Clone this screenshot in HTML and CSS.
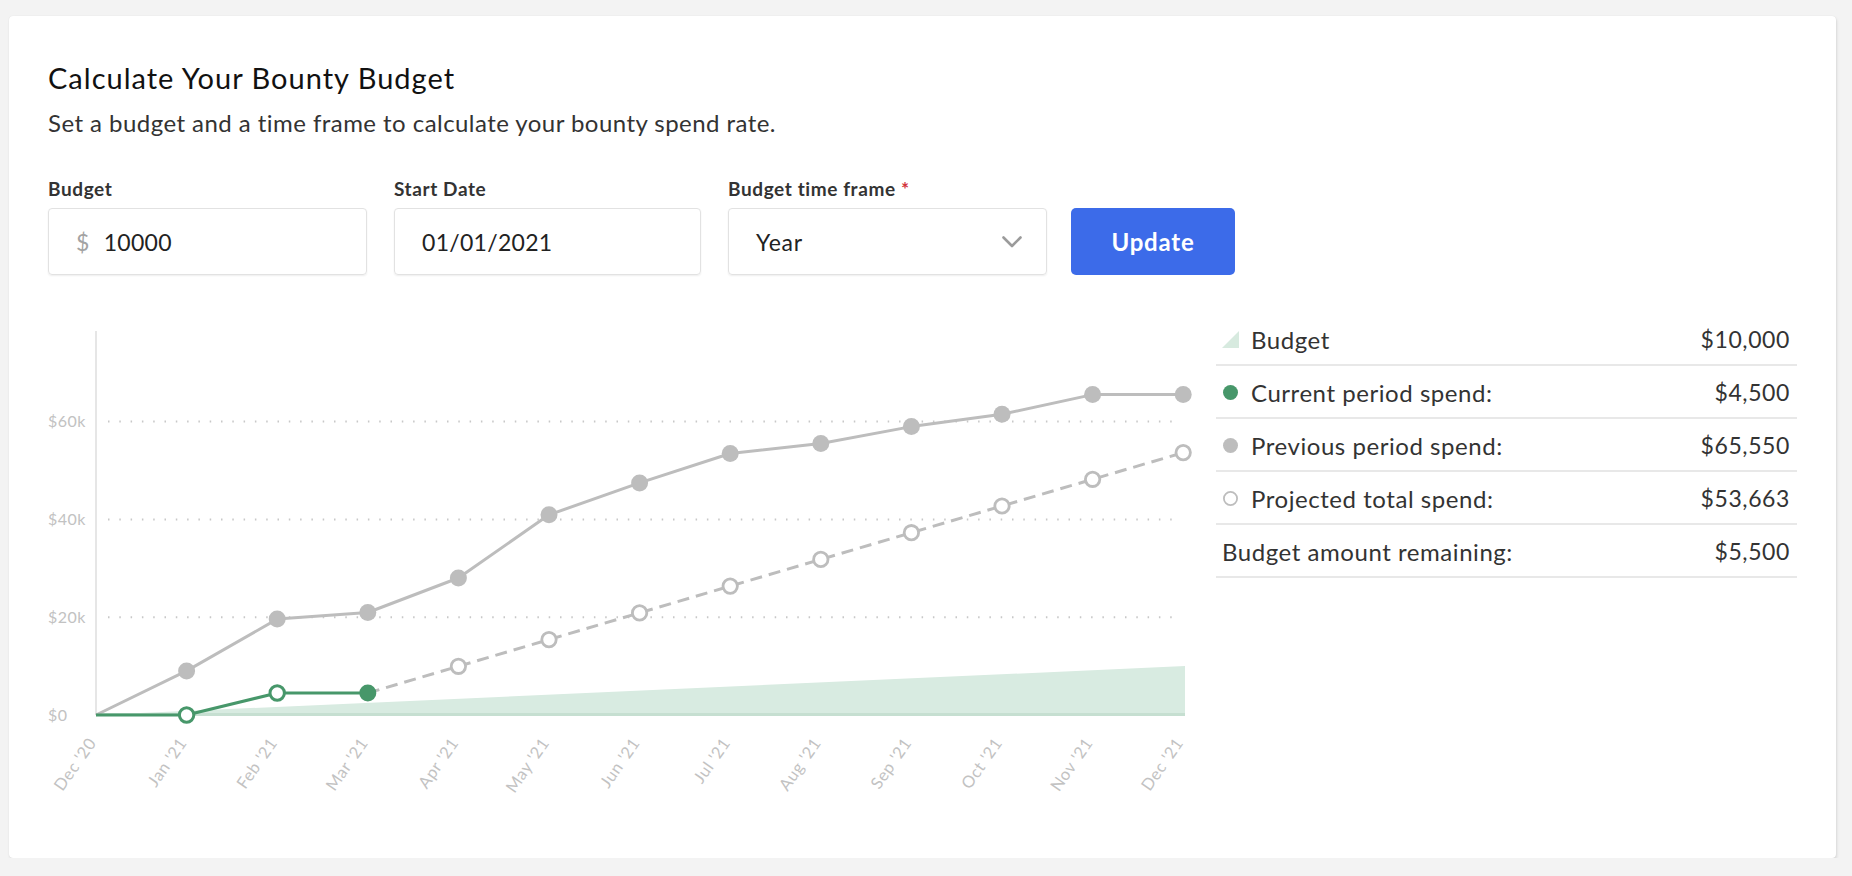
FILE: index.html
```html
<!DOCTYPE html>
<html lang="en">
<head>
<meta charset="utf-8">
<title>Calculate Your Bounty Budget</title>
<link rel="stylesheet" href="styles.css">
</head>
<body>
<div class="page">
  <section class="card">
    <h1 class="title">Calculate Your Bounty Budget</h1>
    <p class="subtitle">Set a budget and a time frame to calculate your bounty spend rate.</p>

    <form class="form-row" onsubmit="return false">
      <div class="field field-budget">
        <label class="label">Budget</label>
        <div class="input"><span class="prefix">$</span><span class="value">10000</span></div>
      </div>
      <div class="field field-date">
        <label class="label">Start Date</label>
        <div class="input"><span class="value">01/01/2021</span></div>
      </div>
      <div class="field field-frame">
        <label class="label">Budget time frame <span class="req">*</span></label>
        <div class="input select">
          <span class="value">Year</span>
          <svg class="chevron" width="20" height="12" viewBox="0 0 20 12"><path d="M1.5 1.5 L10 10 L18.5 1.5" fill="none" stroke="#9b9b9b" stroke-width="2.6" stroke-linecap="round" stroke-linejoin="round"/></svg>
        </div>
      </div>
      <button class="btn" type="button">Update</button>
    </form>

    <div class="chart-row">
      <svg class="chart" width="1150" height="500" viewBox="0 0 1150 500">
        <g class="grid">
          <line x1="60" y1="120.6" x2="1132" y2="120.6"/>
          <line x1="60" y1="218.4" x2="1132" y2="218.4"/>
          <line x1="60" y1="316.2" x2="1132" y2="316.2"/>
        </g>
        <g class="ytick">
          <text x="0" y="126.4">$60k</text>
          <text x="0" y="224.2">$40k</text>
          <text x="0" y="322">$20k</text>
          <text x="0" y="419.8">$0</text>
        </g>
        <polygon class="budget-area" points="48,414 1137,365.1 1137,414"/>
        <line class="budget-base" x1="48" y1="413.5" x2="1137" y2="413.5"/>
        <line class="axis" x1="48" y1="30" x2="48" y2="414"/>

        <polyline class="prev-line" points="48,414 138.6,369.9 229.2,318.1 319.8,311.5 410.4,277 501,213.8 591.6,181.9 682.2,152.5 772.8,142.5 863.4,125.6 954,113.2 1044.6,93.6 1135.2,93.6"/>
        <g class="prev-dot">
          <circle cx="138.6" cy="369.9" r="8.5"/>
          <circle cx="229.2" cy="318.1" r="8.5"/>
          <circle cx="319.8" cy="311.5" r="8.5"/>
          <circle cx="410.4" cy="277" r="8.5"/>
          <circle cx="501" cy="213.8" r="8.5"/>
          <circle cx="591.6" cy="181.9" r="8.5"/>
          <circle cx="682.2" cy="152.5" r="8.5"/>
          <circle cx="772.8" cy="142.5" r="8.5"/>
          <circle cx="863.4" cy="125.6" r="8.5"/>
          <circle cx="954" cy="113.2" r="8.5"/>
          <circle cx="1044.6" cy="93.6" r="8.5"/>
          <circle cx="1135.2" cy="93.6" r="8.5"/>
        </g>

        <polyline class="proj-line" points="319.8,392 410.4,365.3 501,338.6 591.6,311.9 682.2,285.1 772.8,258.4 863.4,231.7 954,205 1044.6,178.3 1135.2,151.6"/>
        <g class="proj-dot">
          <circle cx="410.4" cy="365.3" r="7.2"/>
          <circle cx="501" cy="338.6" r="7.2"/>
          <circle cx="591.6" cy="311.9" r="7.2"/>
          <circle cx="682.2" cy="285.1" r="7.2"/>
          <circle cx="772.8" cy="258.4" r="7.2"/>
          <circle cx="863.4" cy="231.7" r="7.2"/>
          <circle cx="954" cy="205" r="7.2"/>
          <circle cx="1044.6" cy="178.3" r="7.2"/>
          <circle cx="1135.2" cy="151.6" r="7.2"/>
        </g>

        <polyline class="cur-line" points="48,414 138.6,414 229.2,392 319.8,392"/>
        <circle class="cur-hollow" cx="138.6" cy="414" r="7.2"/>
        <circle class="cur-hollow" cx="229.2" cy="392" r="7.2"/>
        <circle class="cur-dot" cx="319.8" cy="392" r="8.5"/>

        <g class="xtick">
          <text transform="translate(49,442) rotate(-55)">Dec '20</text>
          <text transform="translate(139.6,442) rotate(-55)">Jan '21</text>
          <text transform="translate(230.2,442) rotate(-55)">Feb '21</text>
          <text transform="translate(320.8,442) rotate(-55)">Mar '21</text>
          <text transform="translate(411.4,442) rotate(-55)">Apr '21</text>
          <text transform="translate(502,442) rotate(-55)">May '21</text>
          <text transform="translate(592.6,442) rotate(-55)">Jun '21</text>
          <text transform="translate(683.2,442) rotate(-55)">Jul '21</text>
          <text transform="translate(773.8,442) rotate(-55)">Aug '21</text>
          <text transform="translate(864.4,442) rotate(-55)">Sep '21</text>
          <text transform="translate(955,442) rotate(-55)">Oct '21</text>
          <text transform="translate(1045.6,442) rotate(-55)">Nov '21</text>
          <text transform="translate(1136.2,442) rotate(-55)">Dec '21</text>
        </g>
      </svg>

      <div class="legend">
        <div class="legend-row">
          <span class="name"><svg class="icon" width="17" height="17" viewBox="0 0 17 17"><polygon points="0,17 17,17 17,0" fill="#d7eadf"/></svg>Budget</span>
          <span class="amount">$10,000</span>
        </div>
        <div class="legend-row">
          <span class="name"><svg class="icon" width="17" height="17" viewBox="0 0 17 17"><circle cx="8.5" cy="8.5" r="7.5" fill="#47976a"/></svg>Current period spend:</span>
          <span class="amount">$4,500</span>
        </div>
        <div class="legend-row">
          <span class="name"><svg class="icon" width="17" height="17" viewBox="0 0 17 17"><circle cx="8.5" cy="8.5" r="7.5" fill="#bdbdbd"/></svg>Previous period spend:</span>
          <span class="amount">$65,550</span>
        </div>
        <div class="legend-row">
          <span class="name"><svg class="icon" width="17" height="17" viewBox="0 0 17 17"><circle cx="8.5" cy="8.5" r="6.6" fill="#fff" stroke="#bdbdbd" stroke-width="1.8"/></svg>Projected total spend:</span>
          <span class="amount">$53,663</span>
        </div>
        <div class="legend-row">
          <span class="name">Budget amount remaining:</span>
          <span class="amount">$5,500</span>
        </div>
      </div>
    </div>
  </section>
</div>
</body>
</html>
```

FILE: styles.css
```css
* { box-sizing: border-box; }

html, body {
  margin: 0;
  padding: 0;
  background: #f3f3f3;
  font-family: Lato, "Liberation Sans", sans-serif;
  color: #222;
}

.page {
  padding: 16px 16px 0 9px;
}

.card {
  background: #fff;
  border-radius: 4px;
  height: 842px;
  padding: 46px 39px 0;
  box-shadow: 0 0 1px rgba(0, 0, 0, 0.12), 1px 2px 3px rgba(0, 0, 0, 0.10);
}

.title {
  margin: 0;
  font-size: 29px;
  line-height: 32px;
  font-weight: 400;
  letter-spacing: 1px;
  color: #111;
}

.subtitle {
  margin: 15px 0 0;
  font-size: 24px;
  line-height: 28px;
  letter-spacing: 0.45px;
  color: #333;
}

.form-row {
  display: flex;
  align-items: flex-end;
  gap: 27px;
  margin: 41px 0 0;
}

.field {
  display: flex;
  flex-direction: column;
  gap: 8px;
}

.field-budget { width: 319px; }
.field-date { width: 307px; }
.field-frame { width: 319px; }

.label {
  font-size: 19px;
  line-height: 22px;
  font-weight: 700;
  letter-spacing: 0.6px;
  color: #333;
}

.req {
  color: #d2333b;
  font-weight: 700;
}

.input {
  height: 67px;
  border: 1px solid #e2e2e2;
  border-radius: 4px;
  box-shadow: 0 1px 2px rgba(0, 0, 0, 0.07);
  display: flex;
  align-items: center;
  padding: 0 27px;
  font-size: 23px;
  letter-spacing: 0.3px;
  color: #222;
}

.prefix {
  color: #a3a3a3;
  margin-right: 14px;
}

.select {
  justify-content: space-between;
  padding-right: 24px;
}

.select .value { letter-spacing: 0.8px; }

.chevron { display: block; }

.btn {
  width: 164px;
  height: 67px;
  margin-left: -3px;
  border: none;
  border-radius: 5px;
  background: #3c6be9;
  color: #fff;
  font-family: Lato, "Liberation Sans", sans-serif;
  font-size: 24px;
  font-weight: 700;
  letter-spacing: 0.8px;
  cursor: pointer;
}

.chart-row {
  display: flex;
  align-items: flex-start;
  gap: 18px;
  margin-top: 26px;
}

.chart {
  display: block;
  flex: none;
  overflow: visible;
}

.grid line {
  stroke: #c8c8c8;
  stroke-width: 2;
  stroke-dasharray: 1.5 9.8;
}

.ytick text {
  font-size: 16px;
  letter-spacing: 0.5px;
  fill: #c2c2c2;
}

.xtick text {
  font-size: 16.5px;
  letter-spacing: 0.6px;
  fill: #c2c2c2;
  text-anchor: end;
}

.axis {
  stroke: #e6e6e6;
  stroke-width: 2;
}

.budget-area { fill: #d8ebe1; }
.budget-base { stroke: #c6dfd1; stroke-width: 3; }

.prev-line {
  fill: none;
  stroke: #bdbdbd;
  stroke-width: 3;
  stroke-linejoin: round;
}

.prev-dot circle { fill: #bdbdbd; }

.proj-line {
  fill: none;
  stroke: #bdbdbd;
  stroke-width: 3;
  stroke-dasharray: 12 7;
}

.proj-dot circle {
  fill: #fff;
  stroke: #bdbdbd;
  stroke-width: 2.8;
}

.cur-line {
  fill: none;
  stroke: #47976a;
  stroke-width: 3;
  stroke-linejoin: round;
}

.cur-hollow {
  fill: #fff;
  stroke: #47976a;
  stroke-width: 3;
}

.cur-dot { fill: #47976a; }

.legend {
  width: 581px;
  flex: none;
  margin-top: 12px;
  font-size: 24px;
  color: #333;
}

.legend-row {
  display: flex;
  align-items: center;
  justify-content: space-between;
  height: 53px;
  padding: 1px 7px 0 6px;
  border-bottom: 2px solid #e8e8e8;
  white-space: nowrap;
}

.legend .name {
  display: flex;
  align-items: center;
  gap: 12px;
  letter-spacing: 0.55px;
}

.legend .icon { display: block; flex: none; }

.legend .amount {
  font-size: 23px;
  letter-spacing: 0.6px;
}
```
